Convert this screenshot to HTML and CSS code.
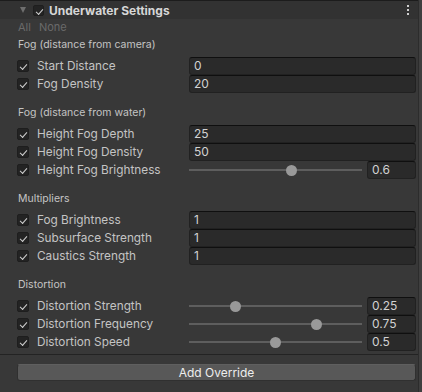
FILE: index.html
```html
<!DOCTYPE html>
<html lang="en">
<head>
  <meta charset="UTF-8" />
  <title>Underwater Settings</title>
  <link rel="stylesheet" href="styles.css">
</head>
<body>
  <div class="inspector">
    <div class="panel">
      <div class="comp-header">
        <span class="foldout"></span>
        <span class="check on small"></span>
        <span class="comp-title">Underwater Settings</span>
        <span class="kebab"><i></i><i></i><i></i></span>
      </div>

      <div class="comp-body">
        <div class="toggles"><span>All</span><span>None</span></div>

        <div class="group">
          <div class="group-title">Fog (distance from camera)</div>
          <div class="row"><span class="check on"></span><label>Start Distance</label><div class="field">0</div></div>
          <div class="row"><span class="check on"></span><label>Fog Density</label><div class="field">20</div></div>
        </div>

        <div class="group">
          <div class="group-title">Fog (distance from water)</div>
          <div class="row"><span class="check on"></span><label>Height Fog Depth</label><div class="field">25</div></div>
          <div class="row"><span class="check on"></span><label>Height Fog Density</label><div class="field">50</div></div>
          <div class="row">
            <span class="check on"></span><label>Height Fog Brightness</label>
            <div class="slider"><div class="track" style="--v:0.6"><span class="knob"></span></div><div class="field value">0.6</div></div>
          </div>
        </div>

        <div class="group">
          <div class="group-title">Multipliers</div>
          <div class="row"><span class="check on"></span><label>Fog Brightness</label><div class="field">1</div></div>
          <div class="row"><span class="check on"></span><label>Subsurface Strength</label><div class="field">1</div></div>
          <div class="row"><span class="check on"></span><label>Caustics Strength</label><div class="field">1</div></div>
        </div>

        <div class="group">
          <div class="group-title">Distortion</div>
          <div class="row">
            <span class="check on"></span><label>Distortion Strength</label>
            <div class="slider"><div class="track" style="--v:0.25"><span class="knob"></span></div><div class="field value">0.25</div></div>
          </div>
          <div class="row">
            <span class="check on"></span><label>Distortion Frequency</label>
            <div class="slider"><div class="track" style="--v:0.75"><span class="knob"></span></div><div class="field value">0.75</div></div>
          </div>
          <div class="row">
            <span class="check on"></span><label>Distortion Speed</label>
            <div class="slider"><div class="track" style="--v:0.5"><span class="knob"></span></div><div class="field value">0.5</div></div>
          </div>
        </div>
      </div>

      <div class="footer">
        <button class="add-btn">Add Override</button>
      </div>
    </div>
    <div class="scroll-edge"></div>
  </div>
</body>
</html>
```

FILE: styles.css
```css
* {
  margin: 0;
  padding: 0;
  box-sizing: border-box;
}

body, html {
  width: 100%;
  height: 100%;
  overflow: hidden;
  background-color: #383838;
  font-family: 'Inter', 'Noto Sans', sans-serif;
  color: #c4c4c4;
}

.inspector {
  display: flex;
  height: 100%;
}

.panel {
  flex: 1;
  display: flex;
  flex-direction: column;
  background-color: #383838;
}

.scroll-edge {
  width: 4px;
  border-left: 1px solid #2c2c2c;
  background-color: #3f3f3f;
}

/* component header */
.comp-header {
  height: 19px;
  border-top: 1px solid #1c1c1c;
  background-color: #323232;
  display: flex;
  align-items: center;
  padding-left: 20px;
}

.foldout {
  width: 0;
  height: 0;
  border-left: 3.5px solid transparent;
  border-right: 3.5px solid transparent;
  border-top: 6px solid #6e6e6e;
  margin-right: 7px;
}

.comp-title {
  font-size: 12px;
  font-weight: 700;
  color: #d6d6d6;
  margin-left: 5px;
}

.kebab {
  margin-left: auto;
  margin-right: 9px;
  display: flex;
  flex-direction: column;
  gap: 2px;
}

.kebab i {
  display: block;
  width: 2px;
  height: 2px;
  background-color: #cfcfcf;
}

/* checkbox */
.check {
  width: 12px;
  height: 12px;
  flex: 0 0 12px;
  border: 1px solid #1e1e1e;
  border-radius: 2px;
  background-color: #232323;
  position: relative;
}

.check.small {
  width: 11px;
  height: 11px;
  flex-basis: 11px;
}

.check.on::after {
  content: "";
  position: absolute;
  left: 2px;
  top: 1px;
  width: 6px;
  height: 3px;
  border-left: 1.2px solid #d0d0d0;
  border-bottom: 1.2px solid #d0d0d0;
  transform: translate(0, 2px) rotate(-48deg);
}

/* body */
.toggles {
  height: 16px;
  display: flex;
  align-items: center;
  gap: 8px;
  padding-left: 18px;
  font-size: 11px;
  color: #6a6a6a;
}

.group {
  margin-top: 12px;
}

.toggles + .group {
  margin-top: 2px;
}

.group-title {
  height: 16px;
  line-height: 16px;
  padding-left: 18px;
  margin-bottom: 4px;
  font-size: 10.5px;
  color: #c4c4c4;
}

.row {
  height: 18px;
  display: flex;
  align-items: center;
  padding-left: 17px;
  padding-right: 2px;
}

.row label {
  flex: 0 0 160px;
  padding-left: 8px;
  font-size: 11.8px;
  color: #c4c4c4;
  white-space: nowrap;
}

.field {
  flex: 1;
  height: 18px;
  line-height: 16px;
  padding-left: 4px;
  background-color: #2a2a2a;
  border: 1px solid #212121;
  border-top-color: #0f0f0f;
  border-radius: 3px;
  font-size: 12px;
  color: #d2d2d2;
}

.slider {
  flex: 1;
  display: flex;
  align-items: center;
  height: 18px;
}

.track {
  flex: 1;
  height: 2px;
  background-color: #5e5e5e;
  position: relative;
  margin-right: 5px;
}

.knob {
  position: absolute;
  top: -4.5px;
  left: calc(var(--v) * (100% - 11px));
  width: 11px;
  height: 11px;
  border-radius: 50%;
  background-color: #999999;
}

.field.value {
  flex: 0 0 49px;
}

/* footer */
.footer {
  margin-top: 3px;
  border-top: 1px solid #232323;
  padding: 9px 2px 0 17px;
}

.add-btn {
  display: block;
  width: 100%;
  height: 17px;
  background-color: #585858;
  border: 1px solid #303030;
  border-top-color: #5f5f5f;
  border-radius: 3px;
  font-family: 'Inter', 'Noto Sans', sans-serif;
  font-size: 12px;
  color: #eeeeee;
  line-height: 14px;
}
```
